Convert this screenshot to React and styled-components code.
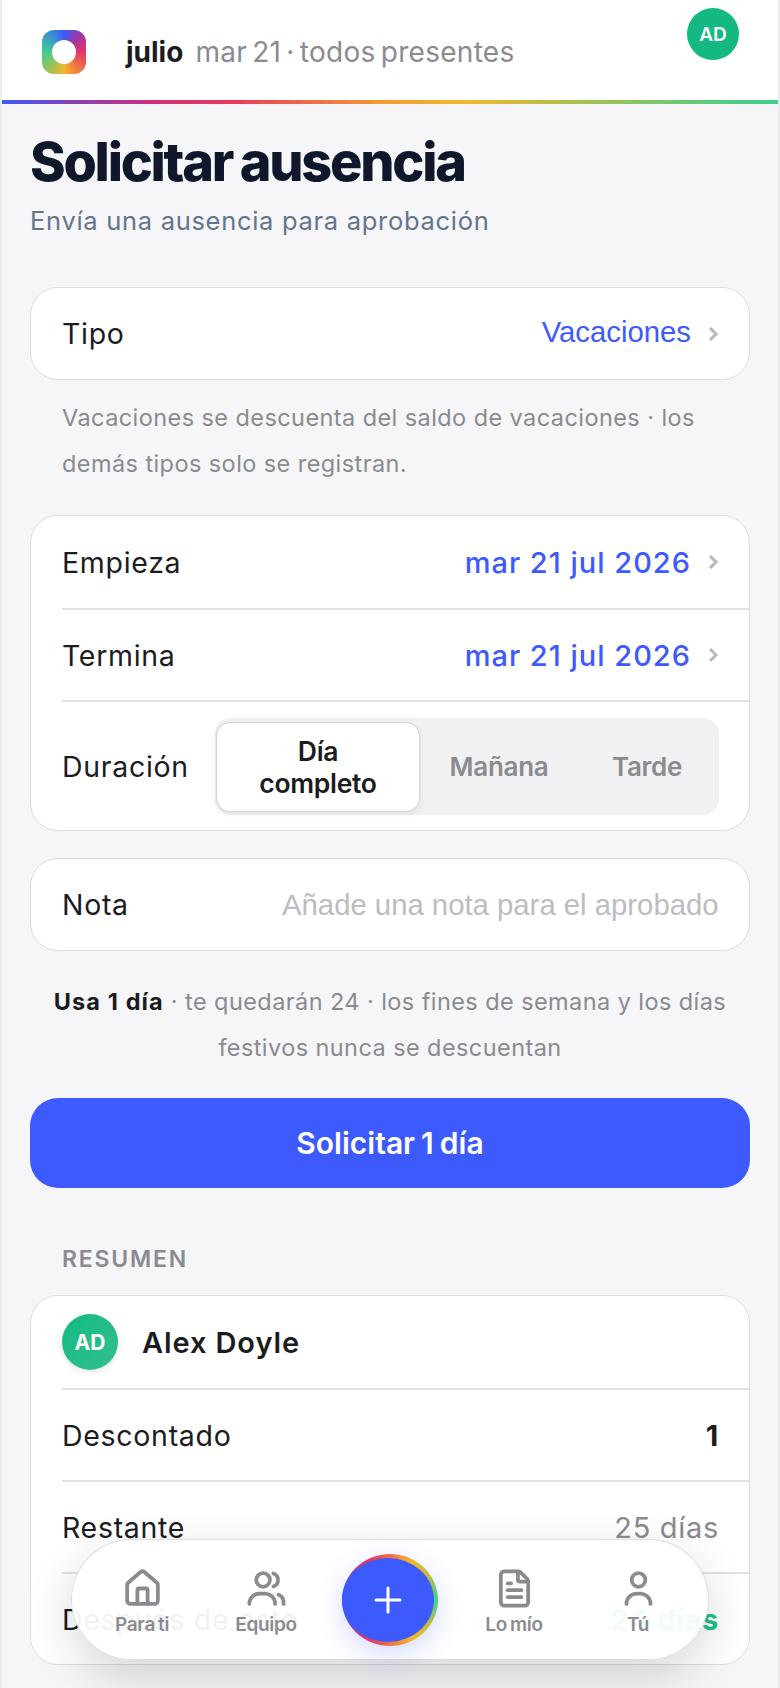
import styled, { createGlobalStyle } from "styled-components";

const GlobalStyle = createGlobalStyle`
  html, body {
    margin: 0;
    padding: 0;
    background: #ebebee;
  }
  * {
    box-sizing: border-box;
  }
`;

const rainbow =
  "#3d5afe, #8e3fb0, #d42f7c, #e83a5c, #ef6f47, #f59e33, #f2b92a, #bcbd45, #8fc45f, #5fcb7c, #3fcf8e";

const Screen = styled.div`
  position: relative;
  width: 776px;
  height: 1688px;
  margin: 0 auto;
  overflow: hidden;
  background: #f6f6f9;
  font-family: Inter, "Liberation Sans", sans-serif;
  color: #1c1c1e;
`;

const Header = styled.header`
  display: flex;
  align-items: flex-start;
  height: 104px;
  padding: 8px 39px 0 40px;
  background: #fff;
  border-bottom: 4px solid transparent;
  border-image: linear-gradient(90deg, ${rainbow}) 1;
`;

const Logo = styled.div`
  display: flex;
  align-items: center;
  justify-content: center;
  width: 44px;
  height: 44px;
  margin-top: 22px;
  border-radius: 12px;
  background: conic-gradient(#3d5afe, #a1379f, #e0356a, #ef6f47, #f2b92a, #8fc45f, #3fcf8e, #3a9bc8, #3d5afe);

  &::after {
    content: "";
    width: 24px;
    height: 24px;
    border-radius: 50%;
    background: #fff;
  }
`;

const Today = styled.div`
  display: flex;
  gap: 12px;
  margin: 26px 0 0 40px;
  font-size: 28px;
  line-height: 36px;
  letter-spacing: 0.28px;
  word-spacing: -3px;
  color: #8a8a90;
`;

const Month = styled.span`
  font-weight: 700;
  letter-spacing: 0;
  color: #1c1c1e;
`;

const HeaderAvatar = styled.div`
  display: flex;
  align-items: center;
  justify-content: center;
  width: 52px;
  height: 52px;
  margin-left: auto;
  border-radius: 50%;
  background: #14b981;
  color: #fff;
  font-size: 19px;
  font-weight: 600;
`;

const Content = styled.main`
  padding: 26px 28px 0;
`;

const Title = styled.h1`
  margin: 0;
  font-size: 54px;
  line-height: 64px;
  font-weight: 800;
  letter-spacing: -2.25px;
  word-spacing: -2px;
  color: #0f172a;
`;

const Subtitle = styled.p`
  margin: 9px 0 0;
  font-size: 25.5px;
  line-height: 36px;
  letter-spacing: 0.7px;
  color: #64748b;
`;

const Card = styled.section`
  margin-top: ${(p) => p.$top || 0}px;
  background: #fff;
  border: 1px solid #dcdcde;
  border-radius: 28px;
  padding-left: 31px;
`;

const Row = styled.div`
  display: flex;
  align-items: center;
  justify-content: space-between;
  height: ${(p) => p.$height || 92}px;
  padding-right: 30px;
  font-size: 28.5px;
  letter-spacing: 0.7px;

  & + & {
    border-top: 2px solid #e2e2e4;
  }
`;

const Value = styled.span`
  display: flex;
  align-items: center;
  gap: 17px;
  color: #3d5afe;
`;

const SelectText = styled.span`
  font-family: "Liberation Sans", sans-serif;
  font-size: 29.3px;
  letter-spacing: 0;
  margin-top: -3px;
`;

const DateText = styled.span`
  font-size: 29px;
  font-weight: 500;
  letter-spacing: 1px;
`;

const Chevron = styled.svg`
  width: 11px;
  height: 14px;
  fill: none;
  stroke: #b8b8bc;
  stroke-width: 3;
  stroke-linejoin: miter;
`;

const Hint = styled.p`
  margin: 15px 30px 28px 32px;
  font-size: 23.5px;
  line-height: 46px;
  letter-spacing: 0.42px;
  color: #8a8a90;
`;

const Segments = styled.div`
  display: flex;
  align-items: center;
  width: 504px;
  height: 97px;
  padding: 4px 1px 3px 1px;
  border-radius: 16px;
  background: #f1f1f3;
`;

const Segment = styled.div`
  display: flex;
  align-items: center;
  justify-content: center;
  width: ${(p) => p.$width}px;
  height: 90px;
  border-radius: 14px;
  text-align: center;
  font-size: ${(p) => (p.$active ? 26.5 : 26)}px;
  line-height: 32px;
  font-weight: 600;
  letter-spacing: -0.3px;
  color: ${(p) => (p.$active ? "#1c1c1e" : "#8a8a90")};
  background: ${(p) => (p.$active ? "#fff" : "transparent")};
  border: ${(p) => (p.$active ? "1px solid #d5d5d8" : "none")};
  box-shadow: ${(p) => (p.$active ? "0 2px 6px rgba(0, 0, 0, 0.08)" : "none")};
`;

const NoteInput = styled.input`
  width: 437px;
  padding: 0;
  border: none;
  outline: none;
  background: transparent;
  text-align: right;
  font-family: "Liberation Sans", sans-serif;
  font-size: 29.3px;

  &::placeholder {
    color: #bcbcc2;
    opacity: 1;
  }
`;

const Usage = styled.p`
  margin: 28px 16px 27px;
  text-align: center;
  font-size: 23.5px;
  line-height: 46px;
  letter-spacing: 0.42px;
  color: #8a8a90;

  b {
    font-weight: 700;
    letter-spacing: 1.1px;
    color: #1c1c1e;
  }
`;

const SubmitButton = styled.button`
  display: block;
  width: 100%;
  height: 90px;
  border: none;
  border-radius: 28px;
  background: #3d5afe;
  color: #fff;
  font-family: Inter, sans-serif;
  font-size: 30px;
  font-weight: 600;
  word-spacing: -1.5px;
`;

const SectionLabel = styled.h2`
  margin: 56px 0 0 32px;
  font-size: 23px;
  line-height: 30px;
  font-weight: 600;
  letter-spacing: 1.8px;
  color: #8a8a90;
`;

const Person = styled.div`
  display: flex;
  align-items: center;
  gap: 24px;
  font-size: 29px;
  font-weight: 600;
  letter-spacing: 0.9px;
`;

const PersonAvatar = styled.div`
  display: flex;
  align-items: center;
  justify-content: center;
  width: 56px;
  height: 56px;
  border-radius: 50%;
  background: linear-gradient(135deg, #14b981, #34c08f);
  box-shadow: 0 2px 6px rgba(0, 0, 0, 0.1);
  color: #fff;
  font-size: 21px;
  font-weight: 700;
  letter-spacing: 0;
`;

const Stat = styled.span`
  font-size: 29px;
  font-weight: ${(p) => p.$weight || 400};
  color: ${(p) => p.$color || "#1c1c1e"};
`;

const Nav = styled.nav`
  position: absolute;
  left: 69px;
  bottom: 28px;
  display: grid;
  grid-template-columns: repeat(5, 124px);
  justify-content: center;
  align-items: center;
  width: 638px;
  height: 121px;
  border: 1px solid rgba(0, 0, 0, 0.13);
  border-radius: 61px;
  background: rgba(255, 255, 255, 0.94);
  box-shadow: 0 16px 48px rgba(0, 0, 0, 0.16);
`;

const NavItem = styled.div`
  display: flex;
  flex-direction: column;
  align-items: center;
  gap: 4px;
  padding-top: 5px;
  font-size: 19px;
  line-height: 24px;
  font-weight: 600;
  letter-spacing: -0.3px;
  word-spacing: -1.5px;
  color: #8a8a90;
`;

const NavIcon = styled.svg`
  width: 41px;
  height: 41px;
  fill: none;
  stroke: #8a8a90;
  stroke-width: 2.2;
  stroke-linecap: round;
  stroke-linejoin: round;
`;

const Fab = styled.div`
  justify-self: center;
  width: 96px;
  height: 92px;
  padding: 4px 4px 4px 0;
  border-radius: 50%;
  background: conic-gradient(from 90deg, #3fcf8e, #bcbd45, #f2b92a, #ef6f47, #e0356a, #8e3fb0, #3d5afe, #8e3fb0, #e0356a, #ef6f47, #f2b92a, #bcbd45, #3fcf8e);
  box-shadow: 0 8px 26px rgba(61, 90, 254, 0.22);
`;

const FabInner = styled.div`
  display: flex;
  align-items: center;
  justify-content: center;
  height: 100%;
  border-radius: 50%;
  background: #3d5afe;
`;

const PlusIcon = styled.svg`
  width: 28px;
  height: 28px;
  stroke: #fff;
  stroke-width: 3;
  stroke-linecap: round;
`;

const RowChevron = () => (
  <Chevron viewBox="0 0 11 14">
    <path d="M2 1l6 6-6 6" />
  </Chevron>
);

const App = () => {
  return (
    <Screen>
      <GlobalStyle />
      <Header>
        <Logo />
        <Today>
          <Month>julio</Month>
          <span>mar 21 · todos presentes</span>
        </Today>
        <HeaderAvatar>AD</HeaderAvatar>
      </Header>
      <Content>
        <Title>Solicitar ausencia</Title>
        <Subtitle>Envía una ausencia para aprobación</Subtitle>

        <Card $top={48}>
          <Row $height={91}>
            Tipo
            <Value>
              <SelectText>Vacaciones</SelectText>
              <RowChevron />
            </Value>
          </Row>
        </Card>
        <Hint>
          Vacaciones se descuenta del saldo de vacaciones · los demás tipos solo
          se registran.
        </Hint>

        <Card>
          <Row>
            Empieza
            <Value>
              <DateText>mar 21 jul 2026</DateText>
              <RowChevron />
            </Value>
          </Row>
          <Row>
            Termina
            <Value>
              <DateText>mar 21 jul 2026</DateText>
              <RowChevron />
            </Value>
          </Row>
          <Row $height={130}>
            Duración
            <Segments>
              <Segment $width={204} $active>
                Día
                <br />
                completo
              </Segment>
              <Segment $width={158}>Mañana</Segment>
              <Segment $width={138}>Tarde</Segment>
            </Segments>
          </Row>
        </Card>

        <Card $top={27}>
          <Row $height={91}>
            Nota
            <NoteInput placeholder="Añade una nota para el aprobador" />
          </Row>
        </Card>

        <Usage>
          <b>Usa 1 día</b> · te quedarán 24 · los fines de semana y los días
          festivos nunca se descuentan
        </Usage>

        <SubmitButton>Solicitar 1 día</SubmitButton>

        <SectionLabel>RESUMEN</SectionLabel>
        <Card $top={21}>
          <Row>
            <Person>
              <PersonAvatar>AD</PersonAvatar>
              Alex Doyle
            </Person>
          </Row>
          <Row>
            Descontado
            <Stat $weight={700}>1</Stat>
          </Row>
          <Row>
            Restante
            <Stat $color="#8a8a90">25 días</Stat>
          </Row>
          <Row>
            Después de esto
            <Stat $weight={700} $color="#22bf86">
              24 días
            </Stat>
          </Row>
        </Card>
      </Content>

      <Nav>
        <NavItem>
          <NavIcon viewBox="0 0 24 24">
            <path d="M15 21v-8a1 1 0 0 0-1-1h-4a1 1 0 0 0-1 1v8" />
            <path d="M3 10a2 2 0 0 1 .709-1.528l7-6a2 2 0 0 1 2.582 0l7 6A2 2 0 0 1 21 10v9a2 2 0 0 1-2 2H5a2 2 0 0 1-2-2z" />
          </NavIcon>
          Para ti
        </NavItem>
        <NavItem>
          <NavIcon viewBox="0 0 24 24">
            <circle cx="10" cy="7" r="4" />
            <path d="M2 21v-1a6 6 0 0 1 6-5h3a6 6 0 0 1 6 5v1" />
            <path d="M16 3.2a4 4 0 0 1 0 7.6" />
            <path d="M22 21v-1a5 5 0 0 0-3-4.4" />
          </NavIcon>
          Equipo
        </NavItem>
        <Fab>
          <FabInner>
            <PlusIcon viewBox="0 0 28 28">
              <path d="M14 2v24M2 14h24" />
            </PlusIcon>
          </FabInner>
        </Fab>
        <NavItem>
          <NavIcon viewBox="0 0 24 24">
            <path d="M6 22a2 2 0 0 1-2-2V4a2 2 0 0 1 2-2h8a2.4 2.4 0 0 1 1.704.706l3.588 3.588A2.4 2.4 0 0 1 20 8v12a2 2 0 0 1-2 2z" />
            <path d="M14 2v5a1 1 0 0 0 1 1h5" />
            <path d="M10 9H8" />
            <path d="M16 13H8" />
            <path d="M16 17H8" />
          </NavIcon>
          Lo mío
        </NavItem>
        <NavItem>
          <NavIcon viewBox="0 0 24 24">
            <circle cx="12" cy="7" r="4" />
            <path d="M5 21v-1a6 6 0 0 1 6-5h2a6 6 0 0 1 6 5v1" />
          </NavIcon>
          Tú
        </NavItem>
      </Nav>
    </Screen>
  );
};

export default App;
